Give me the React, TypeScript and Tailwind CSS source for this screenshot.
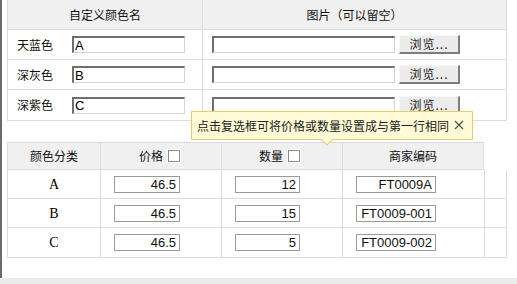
import React from "react";

const cjk = "font-['Noto_Sans_CJK_SC',sans-serif]";
const arial = "font-['Liberation_Sans',Arial,sans-serif]";
const serif = "font-['Liberation_Serif','Times_New_Roman',serif]";

function InsetInput({ value, w }: { value: string; w: string }) {
  return (
    <div
      className={`${w} h-[17px] bg-white border-t-2 border-l-2 border-b border-r border-t-[#6f6f6f] border-l-[#6f6f6f] border-b-[#d4d4d4] border-r-[#d4d4d4] flex items-center pl-[1px] ${arial} text-[13px] text-black leading-none`}
    >
      {value}
    </div>
  );
}

function BrowseButton() {
  return (
    <div
      className={`w-[61px] h-[19px] bg-[#ececec] border-t border-l border-b-2 border-r-2 border-t-[#f8f8f8] border-l-[#f8f8f8] border-b-[#7d7d7d] border-r-[#7d7d7d] flex items-center justify-center ${cjk} text-[12px] text-[#222] leading-none tracking-[1px]`}
    >
      浏览...
    </div>
  );
}

function FlatInput({ value, w }: { value: string; w: string }) {
  return (
    <div
      className={`${w} h-[17px] bg-white border border-[#9a9a9a] flex items-center justify-end pr-[3px] ${arial} text-[13px] text-[#111] leading-none`}
    >
      {value}
    </div>
  );
}

function Checkbox() {
  return (
    <div className="w-[14px] h-[14px] bg-white flex items-center justify-center">
      <div className="w-[12px] h-[12px] border border-[#8e8e8e] bg-white" />
    </div>
  );
}

export default function App() {
  const topRows = [
    { label: "天蓝色", v: "A" },
    { label: "深灰色", v: "B" },
    { label: "深紫色", v: "C" },
  ];
  const rows = [
    { n: "A", p: "46.5", q: "12", c: "FT0009A" },
    { n: "B", p: "46.5", q: "15", c: "FT0009-001" },
    { n: "C", p: "46.5", q: "5", c: "FT0009-002" },
  ];
  return (
    <div className={`w-[517px] h-[284px] bg-white flex flex-col overflow-hidden relative ${cjk}`}>
      <div className="h-[278px] border-l-2 border-[#6b6b6b] pl-[5px] flex flex-col">
        {/* Top table */}
        <div className="w-[500px] border-l border-r border-b border-[#dcdcdc] flex flex-col">
          <div className="h-[30px] bg-[#f0f0f0] border-b border-[#dcdcdc] flex text-[12px] text-[#111]">
            <div className="w-[195px] border-r border-[#dcdcdc] flex items-center justify-center">自定义颜色名</div>
            <div className="flex-1 flex items-center justify-center">图片（可以留空）</div>
          </div>
          {topRows.map((r, i) => (
            <div
              key={r.label}
              className={`h-[30px] flex ${i < 2 ? "border-b border-[#dcdcdc]" : ""}`}
            >
              <div className="w-[195px] border-r border-[#dcdcdc] flex items-center pl-[9px]">
                <span className="w-[55px] text-[12px] text-[#111]">{r.label}</span>
                <InsetInput value={r.v} w="w-[113px]" />
              </div>
              <div className="flex-1 flex items-center pl-[9px] gap-[4px]">
                <InsetInput value="" w="w-[183px]" />
                <BrowseButton />
              </div>
            </div>
          ))}
        </div>

        {/* Bottom table */}
        <div className="mt-[21px] w-[500px] flex flex-col">
          <div className="h-[28px] flex text-[12px] text-[#111]">
            <div className="w-[477px] bg-[#f0f0f0] border border-[#dcdcdc] flex">
              <div className="w-[93px] border-r border-[#dcdcdc] flex items-center justify-center">颜色分类</div>
              <div className="w-[121px] border-r border-[#dcdcdc] flex items-center justify-center gap-[4px] pr-[2px]">
                <span>价格</span>
                <Checkbox />
              </div>
              <div className="w-[121px] border-r border-[#dcdcdc] flex items-center justify-center gap-[4px] pr-[4px]">
                <span>数量</span>
                <Checkbox />
              </div>
              <div className="flex-1 flex items-center justify-center">商家编码</div>
            </div>
          </div>
          <div className="border-l border-r border-b border-[#dcdcdc] flex flex-col">
            {rows.map((r, i) => (
              <div key={r.n} className={`h-[29px] flex ${i < 2 ? "border-b border-[#dcdcdc]" : ""}`}>
                <div className={`w-[93px] border-r border-[#dcdcdc] flex items-center justify-center ${serif} text-[14px] text-black`}>
                  {r.n}
                </div>
                <div className="w-[121px] border-r border-[#dcdcdc] flex items-center pl-[13px]">
                  <FlatInput value={r.p} w="w-[66px]" />
                </div>
                <div className="w-[121px] border-r border-[#dcdcdc] flex items-center pl-[13px]">
                  <FlatInput value={r.q} w="w-[65px]" />
                </div>
                <div className="w-[142px] border-r border-[#dcdcdc] flex items-center pl-[13px]">
                  <FlatInput value={r.c} w="w-[80px]" />
                </div>
                <div className="flex-1" />
              </div>
            ))}
          </div>
        </div>
      </div>
      <div className="flex-1 bg-[#ececec]" />

      {/* Tooltip */}
      <div className="absolute left-[191px] top-[111px] w-[282px] h-[29px] bg-[#fffbd6] border border-[#e2cd74] flex items-center pl-[5px] text-[12px] text-[#222]">
        <span>点击复选框可将价格或数量设置成与第一行相同</span>
        <svg className="absolute right-[8px] top-[8px]" width="10" height="10" viewBox="0 0 10 10">
          <path d="M1 1 L9 9 M9 1 L1 9" stroke="#555" strokeWidth="1.3" fill="none" />
        </svg>
        <div className="absolute left-[131px] bottom-[-5px] w-[8px] h-[8px] bg-[#fffbd6] border-r border-b border-[#e2cd74] rotate-45" />
      </div>
    </div>
  );
}
